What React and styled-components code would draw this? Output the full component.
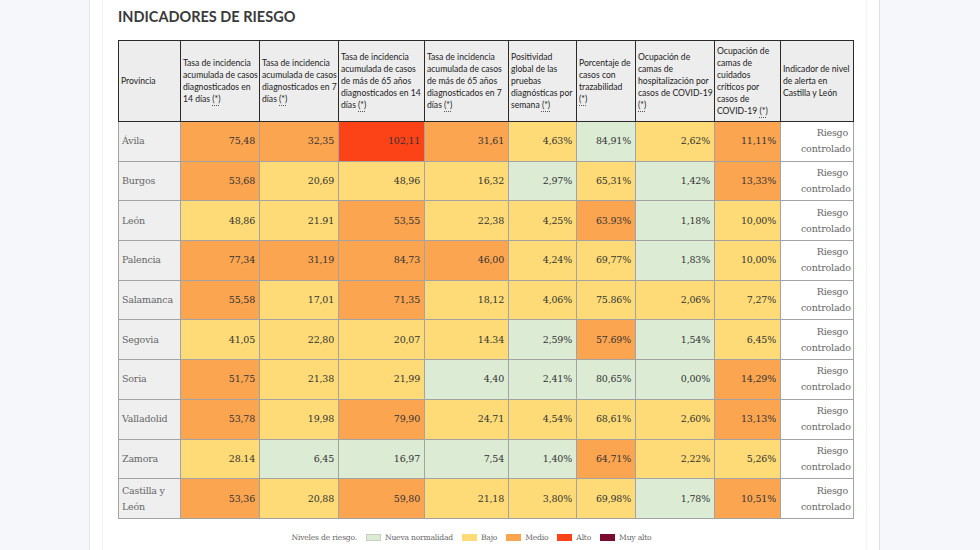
import React from 'react'
import styled, { createGlobalStyle } from 'styled-components'

const LEVELS = {
  n: '#dcebd3',
  b: '#fedb76',
  m: '#fca550',
  a: '#fc4318',
  x: '#7a0b2e',
}

// [label, tight] - tight headers get extra right padding so they wrap like the source
const columns = [
  ['Tasa de incidencia acumulada de casos diagnosticados en 14 días'],
  ['Tasa de incidencia acumulada de casos diagnosticados en 7 días'],
  ['Tasa de incidencia acumulada de casos de más de 65 años diagnosticados en 14 días'],
  ['Tasa de incidencia acumulada de casos de más de 65 años diagnosticados en 7 días'],
  ['Positividad global de las pruebas diagnósticas por semana'],
  ['Porcentaje de casos con trazabilidad', true],
  ['Ocupación de camas de hospitalización por casos de COVID-19'],
  ['Ocupación de camas de cuidados críticos por casos de COVID-19', true],
]

const widths = [62, 79, 79, 86, 84, 68, 59, 79, 66, 73]

const rows = [
  ['Ávila', [['75,48', 'm'], ['32,35', 'm'], ['102,11', 'a'], ['31,61', 'm'], ['4,63%', 'b'], ['84,91%', 'n'], ['2,62%', 'b'], ['11,11%', 'm']]],
  ['Burgos', [['53,68', 'm'], ['20,69', 'b'], ['48,96', 'b'], ['16,32', 'b'], ['2,97%', 'n'], ['65,31%', 'b'], ['1,42%', 'n'], ['13,33%', 'm']]],
  ['León', [['48,86', 'b'], ['21.91', 'b'], ['53,55', 'm'], ['22,38', 'b'], ['4,25%', 'b'], ['63.93%', 'm'], ['1,18%', 'n'], ['10,00%', 'b']]],
  ['Palencia', [['77,34', 'm'], ['31,19', 'm'], ['84,73', 'm'], ['46,00', 'm'], ['4,24%', 'b'], ['69,77%', 'b'], ['1,83%', 'n'], ['10,00%', 'b']]],
  ['Salamanca', [['55,58', 'm'], ['17,01', 'b'], ['71,35', 'm'], ['18,12', 'b'], ['4,06%', 'b'], ['75.86%', 'b'], ['2,06%', 'b'], ['7,27%', 'b']]],
  ['Segovia', [['41,05', 'b'], ['22,80', 'b'], ['20,07', 'b'], ['14.34', 'b'], ['2,59%', 'n'], ['57.69%', 'm'], ['1,54%', 'n'], ['6,45%', 'b']]],
  ['Soria', [['51,75', 'm'], ['21,38', 'b'], ['21,99', 'b'], ['4,40', 'n'], ['2,41%', 'n'], ['80,65%', 'n'], ['0,00%', 'n'], ['14,29%', 'm']]],
  ['Valladolid', [['53,78', 'm'], ['19,98', 'b'], ['79,90', 'm'], ['24,71', 'b'], ['4,54%', 'b'], ['68,61%', 'b'], ['2,60%', 'b'], ['13,13%', 'm']]],
  ['Zamora', [['28.14', 'b'], ['6,45', 'n'], ['16,97', 'n'], ['7,54', 'n'], ['1,40%', 'n'], ['64,71%', 'm'], ['2,22%', 'b'], ['5,26%', 'b']]],
  ['Castilla y León', [['53,36', 'm'], ['20,88', 'b'], ['59,80', 'm'], ['21,18', 'b'], ['3,80%', 'b'], ['69,98%', 'b'], ['1,78%', 'n'], ['10,51%', 'm']]],
]

const legend = [
  ['Nueva normalidad', 'n'],
  ['Bajo', 'b'],
  ['Medio', 'm'],
  ['Alto', 'a'],
  ['Muy alto', 'x'],
]

const App = () => (
  <Page>
    <GlobalStyle />
    <Card>
      <Inner>
        <Title>INDICADORES DE RIESGO</Title>
        <Table>
          <colgroup>
            {widths.map((w, i) => (
              <col key={i} style={{ width: w }} />
            ))}
          </colgroup>
          <thead>
            <HeadRow>
              <HeadCell>Provincia</HeadCell>
              {columns.map(([label, tight]) => (
                <HeadCell key={label} $tight={tight}>
                  {label} <Note title="Valor actualizado">(*)</Note>
                </HeadCell>
              ))}
              <HeadCell>Indicador de nivel de alerta en Castilla y León</HeadCell>
            </HeadRow>
          </thead>
          <tbody>
            {rows.map(([name, values]) => (
              <Row key={name}>
                <NameCell>{name}</NameCell>
                {values.map(([value, level], i) => (
                  <ValueCell key={i} $level={level}>{value}</ValueCell>
                ))}
                <AlertCell>Riesgo controlado</AlertCell>
              </Row>
            ))}
          </tbody>
        </Table>
        <Legend>
          <span>Niveles de riesgo.</span>
          {legend.map(([label, level]) => (
            <LegendItem key={label}>
              <Swatch $level={level} />
              {label}
            </LegendItem>
          ))}
        </Legend>
      </Inner>
    </Card>
  </Page>
)

const GlobalStyle = createGlobalStyle`
  html, body {
    margin: 0;
    padding: 0;
    background: #f6f7fb;
  }
`

const Page = styled('div')`
  width: 980px;
  height: 550px;
  overflow: hidden;
  background: #f6f7fb;
`

const Card = styled('div')`
  margin-left: 89px;
  width: 791px;
  height: 550px;
  background: #fff;
  border-left: 1px solid #e6e7ec;
  border-right: 1px solid #e0e1e6;
  box-sizing: border-box;
  padding: 0 12px;
`

const Inner = styled('div')`
  height: 100%;
  border-left: 1px solid #f3f3f3;
  border-right: 1px solid #f3f3f3;
  padding: 8px 0 0 15px;
`

const Title = styled('h2')`
  margin: 0 0 14px;
  font-family: Lato, 'Liberation Sans', sans-serif;
  font-weight: 700;
  font-size: 14.5px;
  line-height: 18px;
  color: #3a3a3a;
`

const Table = styled('table')`
  border-collapse: collapse;
  table-layout: fixed;
  width: 735px;
`

const HeadRow = styled('tr')`
  height: 81px;
`

const HeadCell = styled('th')`
  padding: 4px ${p => (p.$tight ? '3px' : '0')} 4px 2px;
  background: #ededed;
  border: 1px solid #2a2a2a;
  text-align: left;
  vertical-align: middle;
  font-family: Lato, 'Liberation Sans', sans-serif;
  font-weight: 400;
  font-size: 8.6px;
  line-height: 12px;
  color: #222;
`

const Note = styled('abbr')`
  text-decoration: underline dotted #555;
  text-underline-offset: 3px;
  cursor: help;
`

const Row = styled('tr')`
  height: 39.7px;
`

const Cell = styled('td')`
  border: 1px solid #a3a3a3;
  font-family: 'DejaVu Serif', 'Liberation Serif', serif;
  font-size: 9.5px;
  letter-spacing: -0.2px;
  line-height: 16px;
  vertical-align: middle;
`

const NameCell = styled(Cell)`
  background: #efefef;
  padding: 0 3px;
  text-align: left;
  color: #666;
`

const ValueCell = styled(Cell)`
  background: ${p => LEVELS[p.$level]};
  padding: 0 4px;
  text-align: right;
  color: #333;
`

const AlertCell = styled(Cell)`
  background: #fff;
  padding: 0 5px 0 20px;
  text-align: right;
  color: #666;
`

const Legend = styled('div')`
  display: flex;
  justify-content: center;
  align-items: center;
  gap: 9px;
  margin-top: 13px;
  width: 707px;
  font-family: 'DejaVu Serif', 'Liberation Serif', serif;
  font-size: 7.6px;
  letter-spacing: -0.2px;
  line-height: 12px;
  color: #666;
`

const LegendItem = styled('span')`
  display: flex;
  align-items: center;
  gap: 4px;
`

const Swatch = styled('span')`
  width: 13px;
  height: 5px;
  background: ${p => LEVELS[p.$level]};
  border: 1px solid ${p => (p.$level === 'n' ? '#c8cfc4' : 'transparent')};
`

export default App
